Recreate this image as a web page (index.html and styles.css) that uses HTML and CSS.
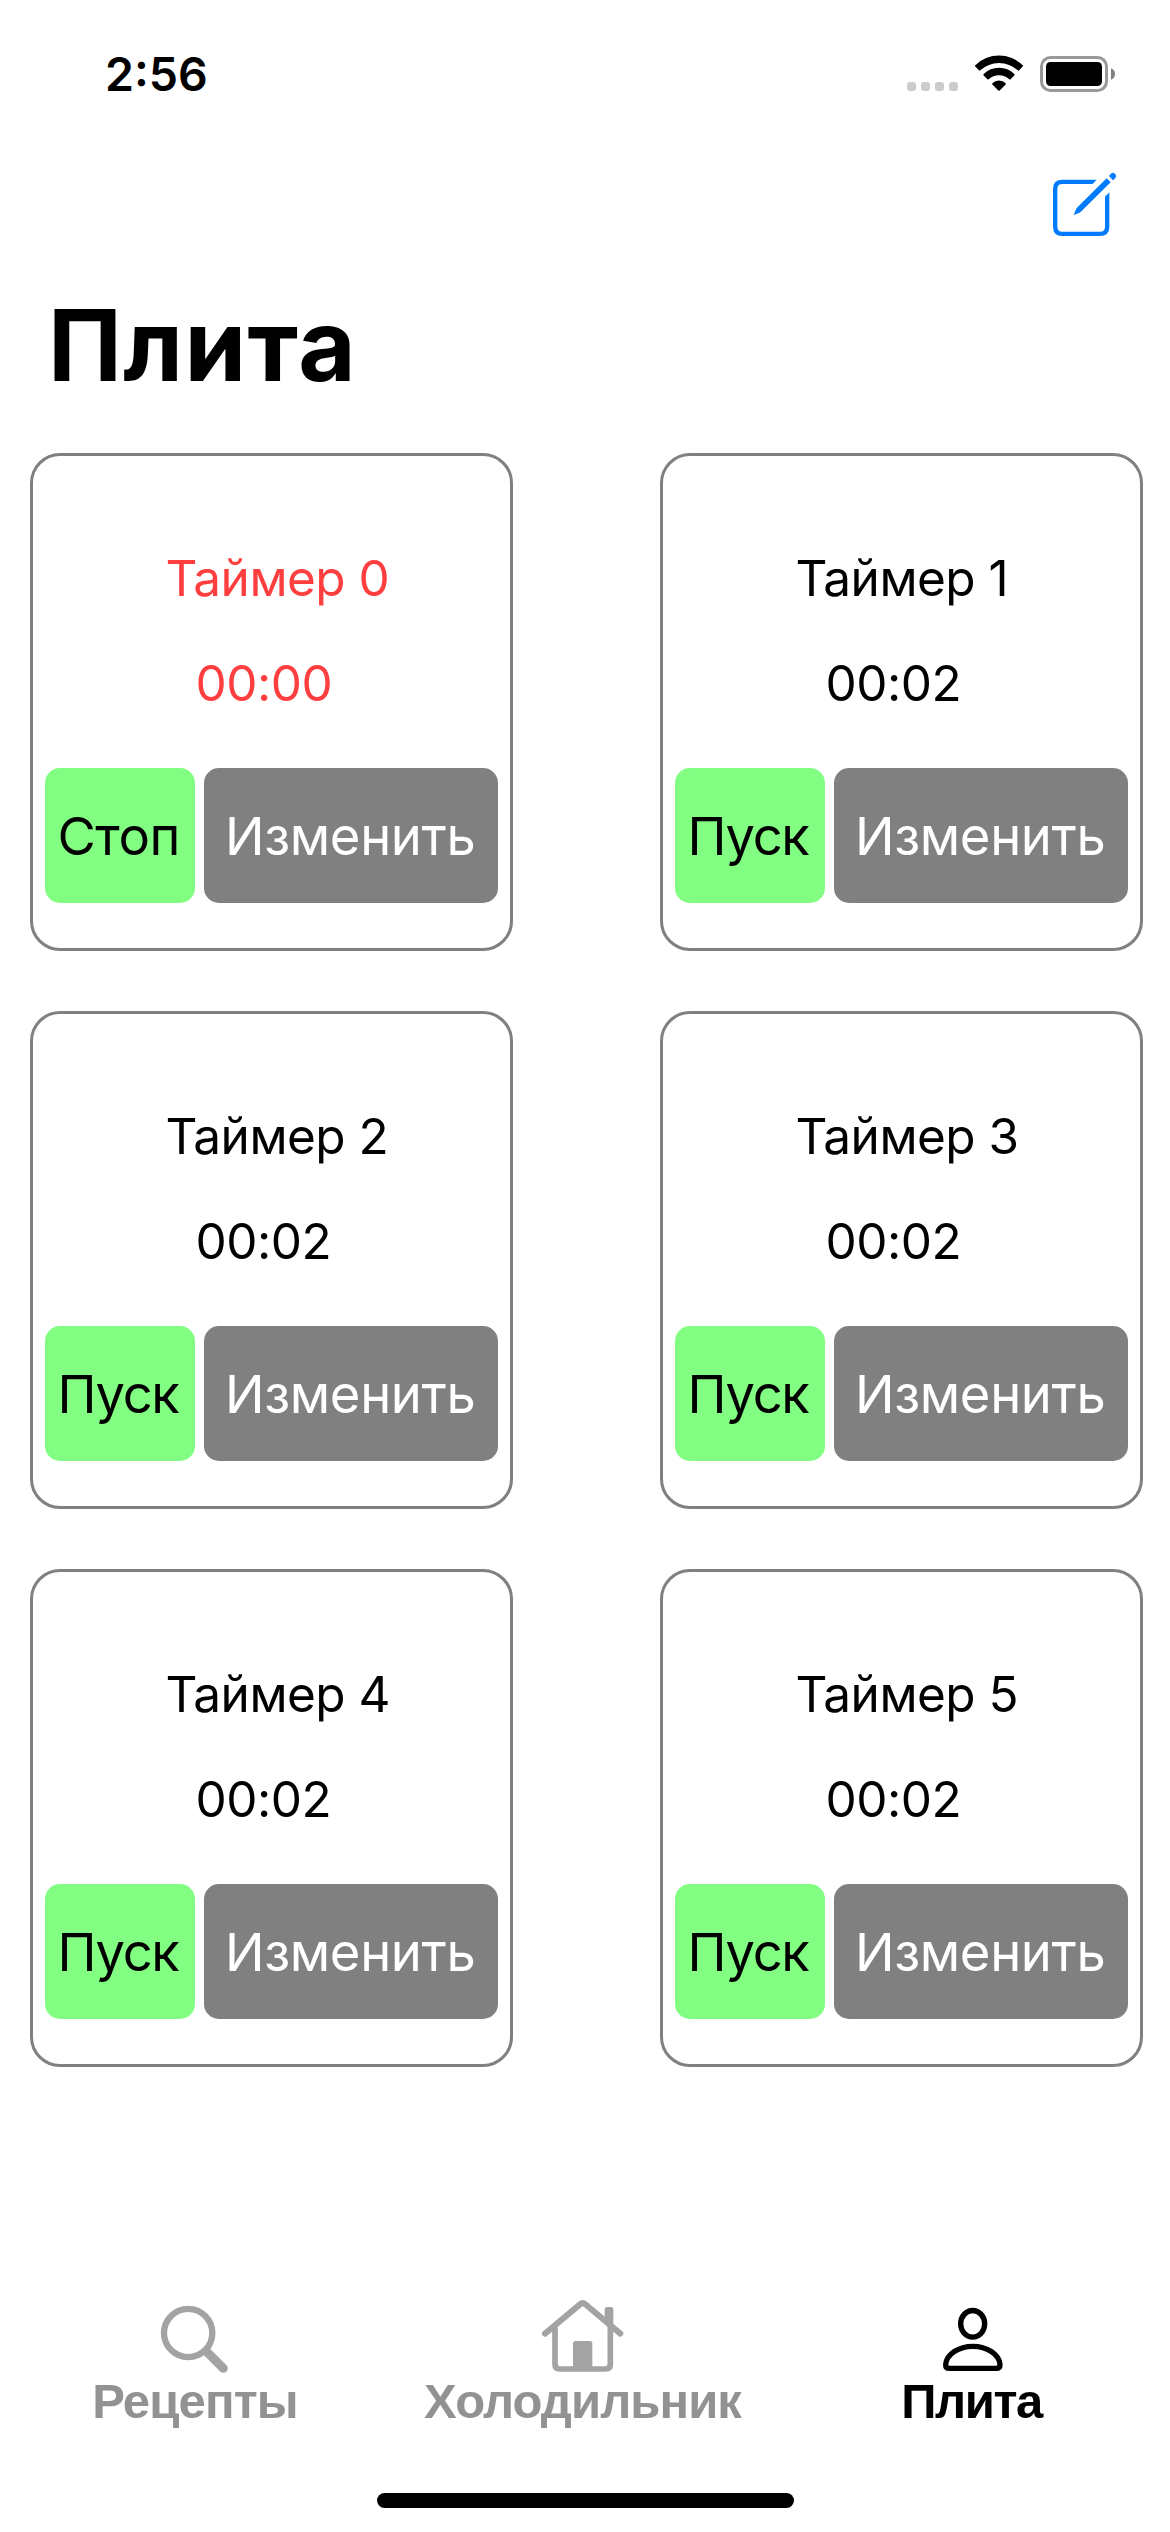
FILE: index.html
```html
<!DOCTYPE html>
<html lang="ru">
<head>
<meta charset="utf-8">
<title>Плита</title>
<link rel="stylesheet" href="styles.css">
</head>
<body>
<div class="screen">
  <header class="status">
    <span class="clock">2:56</span>
    <svg class="status-icons" viewBox="900 50 220 48" aria-hidden="true">
      <g fill="#ccc">
        <rect x="907" y="82" width="9" height="9" rx="3"/>
        <rect x="921" y="82" width="9" height="9" rx="3"/>
        <rect x="935" y="82" width="9" height="9" rx="3"/>
        <rect x="949" y="82" width="9" height="9" rx="3"/>
      </g>
      <path d="M975.3 65.2A34 34 0 0 1 1022.7 65.2Q1023.4 65.9 1022.7 66.6L1019.2 70.3Q1018.5 71 1017.8 70.3A28 28 0 0 0 980.2 70.3Q979.5 71 978.8 70.3L975.3 66.6Q974.6 65.9 975.3 65.2Z"/>
      <path d="M983.7 74Q990 67.8 999 67.8T1014.3 74Q1015 74.7 1014.3 75.4L1010.6 79.2Q1009.9 79.8 1009.2 79.2Q1005 75.3 999 75.3T988.8 79.2Q988.1 79.8 987.4 79.2L983.7 75.4Q983 74.7 983.7 74Z"/>
      <path d="M992.4 83.2Q995 80.5 999 80.5T1005.6 83.2Q1006.3 83.9 1005.6 84.6L999.7 90.5Q999 91.2 998.3 90.5L992.4 84.6Q991.7 83.9 992.4 83.2Z"/>
      <rect x="1041.5" y="57.5" width="65" height="33" rx="9" fill="none" stroke="#999" stroke-width="3"/>
      <rect x="1046" y="62" width="56" height="24" rx="4.5"/>
      <path d="M1111 68.3Q1115 69.8 1115 74T1111 79.7Z" fill="#808080"/>
    </svg>
  </header>

  <nav class="toolbar">
    <svg class="compose" viewBox="510 420 210 210" role="img" aria-label="Редактировать">
      <path fill="#007aff" d="M650 449H547Q519 449 519 477V590Q519 618 547 618H660Q688 618 688 590V487L675 500V590Q675 605 660 605H547Q532 605 532 590V477Q532 462 547 462H638Z"/>
      <path fill="#007aff" d="M581 555L588 538Q590 534 593 531L680 445L692 457L604 544Q601 547 597 549Z"/>
      <path fill="#007aff" d="M687 438L693 431Q699 426 705 431Q711 438 706 444L699 451Z"/>
    </svg>
  </nav>

  <h1 class="title">Плита</h1>

  <main class="grid">
    <section class="card card-done">
      <p class="name">Таймер 0</p><p class="left">00:00</p>
      <div class="actions"><button class="run stop">Стоп</button><button class="edit">Изменить</button></div>
    </section>
    <section class="card">
      <p class="name">Таймер 1</p><p class="left">00:02</p>
      <div class="actions"><button class="run">Пуск</button><button class="edit">Изменить</button></div>
    </section>
    <section class="card">
      <p class="name">Таймер 2</p><p class="left">00:02</p>
      <div class="actions"><button class="run">Пуск</button><button class="edit">Изменить</button></div>
    </section>
    <section class="card">
      <p class="name">Таймер 3</p><p class="left">00:02</p>
      <div class="actions"><button class="run">Пуск</button><button class="edit">Изменить</button></div>
    </section>
    <section class="card">
      <p class="name">Таймер 4</p><p class="left">00:02</p>
      <div class="actions"><button class="run">Пуск</button><button class="edit">Изменить</button></div>
    </section>
    <section class="card">
      <p class="name">Таймер 5</p><p class="left">00:02</p>
      <div class="actions"><button class="run">Пуск</button><button class="edit">Изменить</button></div>
    </section>
  </main>

  <footer class="tabs">
    <a class="tab">
      <svg class="tab-icon" viewBox="225 27 360 252" fill="none" stroke="#a3a3a3" aria-hidden="true">
        <circle cx="384.5" cy="159" r="72.5" stroke-width="19"/>
        <path d="M440 215L490 265" stroke-width="27" stroke-linecap="round"/>
      </svg>
      <span class="label recipes">Рецепты</span>
    </a>
    <a class="tab">
      <svg class="tab-icon" viewBox="375 27 360 252" fill="none" stroke="#a3a3a3" stroke-width="17" aria-hidden="true">
        <path d="M438 161L543 73Q551 66 559 73L664 161" stroke-width="18" stroke-linecap="round"/>
        <path d="M468 142V253Q468 267 482 267H620Q634 267 634 253V138"/>
        <path d="M522 262V190Q522 183 529 183H573Q580 183 580 190V262ZM617 126V88Q617 81 624 81H636Q643 81 643 88V148Z" fill="#a3a3a3" stroke="none"/>
      </svg>
      <span class="label fridge">Холодильник</span>
    </a>
    <a class="tab tab-active">
      <svg class="tab-icon" viewBox="165 27 360 252" fill="none" stroke="#000" stroke-width="16" aria-hidden="true">
        <ellipse cx="341" cy="131.5" rx="36" ry="40"/>
        <path d="M260 254C262 222 300 199 341.500 199S421 222 423 254Q423 265 412 265H271Q260 265 260 254Z"/>
      </svg>
      <span class="label stove">Плита</span>
    </a>
  </footer>
  <div class="home-indicator"></div>
</div>
</body>
</html>
```
FILE: styles.css
```css
* { box-sizing: border-box; margin: 0; padding: 0; }

body {
  background: #fff;
  color: #000;
  font-family: "Inter", "Liberation Sans", sans-serif;
}

.screen {
  width: 1170px;
  height: 2532px;
  display: flex;
  flex-direction: column;
  overflow: hidden;
}

.status {
  height: 98px;
  padding: 50px 50px 0 105px;
  display: flex;
  justify-content: space-between;
}
.clock { font-size: 46.5px; font-weight: 600; line-height: 48px; }
.status-icons { width: 220px; height: 48px; }

.toolbar {
  height: 187px;
  padding: 72px 50px 0 0;
  display: flex;
  justify-content: flex-end;
}
.compose { width: 70px; height: 70px; }

.title {
  height: 168px;
  padding-left: 48px;
  font-size: 99px;
  font-weight: 700;
  line-height: 120px;
  letter-spacing: 1.4px;
}

.grid {
  display: grid;
  grid-template-columns: 483px 483px;
  grid-auto-rows: 498px;
  gap: 60px 147px;
  padding-left: 30px;
}

.card {
  border: 3px solid #808080;
  border-radius: 30px;
  padding: 92px 12px 0;
}
.card-done .name, .card-done .left { color: #ff3f3f; }

.name, .left {
  font-size: 49.5px;
  line-height: 60px;
  letter-spacing: -0.5px;
}
.name { padding-left: 120.5px; }
.left { padding-left: 150.5px; margin-top: 45px; }

.actions { display: flex; gap: 9px; margin-top: 55px; }
.actions button {
  height: 135px;
  padding-top: 2px;
  border: 0;
  border-radius: 15px;
  font: 400 52.5px/133px "Inter", "Liberation Sans", sans-serif;
  text-align: left;
}
.run {
  width: 150px;
  padding-left: 12.5px;
  background: #82ff82;
  color: #000;
}
.actions .run { letter-spacing: -1.3px; }
.actions .stop { letter-spacing: -0.5px; }
.actions .edit {
  width: 294px;
  padding-left: 21px;
  background: #808080;
  color: #fff;
  letter-spacing: -0.35px;
}

.tabs {
  display: grid;
  grid-template-columns: 390px 388px 392px;
  margin-top: 222px;
  height: 204px;
}
.tab {
  display: flex;
  flex-direction: column;
  align-items: center;
}
.tab-icon { width: 120px; height: 84px; }
.label {
  font: 700 49px/56px "Liberation Sans", Arial, sans-serif;
  color: #929292;
}
.tab-active .label { color: #000; }
.recipes { letter-spacing: -0.85px; }
.fridge { letter-spacing: -0.95px; padding-right: 3px; }
.stove { letter-spacing: -1.4px; padding-right: 5px; }

.home-indicator {
  width: 417px;
  height: 15px;
  margin: 0 auto;
  border-radius: 8px;
  background: #000;
}
```
